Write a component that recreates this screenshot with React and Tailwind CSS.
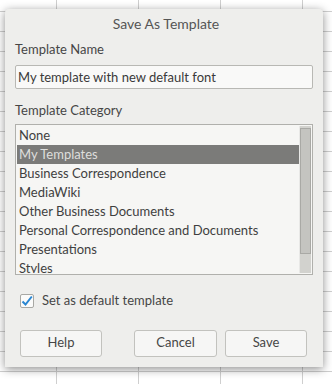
import React from "react";

const categories = [
  "None",
  "My Templates",
  "Business Correspondence",
  "MediaWiki",
  "Other Business Documents",
  "Personal Correspondence and Documents",
  "Presentations",
  "Styles",
];

const SaveAsTemplate = () => {
  const selected = 1;

  return (
    <div
      className="relative w-[332px] h-[384px] overflow-hidden bg-white"
      style={{ fontFamily: 'Lato, "Noto Sans", sans-serif' }}
    >
      {/* spreadsheet grid behind the dialog */}
      <div className="absolute inset-0 bg-[linear-gradient(to_right,#cfcfcf_1px,transparent_1px),linear-gradient(to_bottom,#cfcfcf_1px,transparent_1px)] bg-[size:82px_20px] bg-[position:56px_11px]" />

      {/* Dialog */}
      <div className="absolute left-[5px] top-[9px] w-[318px] h-[358px] bg-[#eeeeec] rounded-t-[4px] shadow-[0_2px_10px_rgba(0,0,0,0.45)] text-[#464646] text-[13px] px-[10px] flex flex-col">
        <div className="h-[27px] flex items-center justify-center text-[14px] text-[#555] pt-[1px] pl-[4px]">
          Save As Template
        </div>

        <div className="mt-[3px] h-[20px] leading-[20px]">Template Name</div>
        <div className="mt-[6px] h-[24px] bg-[#f9f9f8] border border-[#b8b8b4] rounded-[2px] px-[2px] leading-[22px] text-[#3a3a3a]">
          My template with new default font
        </div>

        <div className="mt-[11px] h-[20px] leading-[20px]">Template Category</div>
        <div className="mt-[4px] h-[151px] border border-[#b0b0ac] bg-[#f6f6f4] flex overflow-hidden p-[1px]">
          <div className="flex-1 overflow-hidden">
            {categories.map((c, i) => (
              <div
                key={c}
                className={
                  "h-[19px] leading-[18px] px-[2px] whitespace-nowrap " +
                  (i === selected ? "bg-[#7b7b79] text-[#dededc]" : "text-[#3f3f3f]")
                }
              >
                {c}
              </div>
            ))}
          </div>
          <div className="w-[12px] bg-[#d2d2ce] border-l border-[#e8e8e6] py-[2px] px-[0px]">
            <div className="h-[126px] bg-[#c4c4c0] border border-[#a9a9a5]" />
          </div>
        </div>

        <div className="mt-[16px] flex items-center gap-[8px] pl-[5px]">
          <div className="w-[14px] h-[14px] border border-[#a8a8a4] rounded-[2px] bg-[#fbfbfa] flex items-center justify-center">
            <svg width="12" height="12" viewBox="0 0 12 12">
              <path d="M1.5 6.5 L4.5 9.5 L10.8 1.5" fill="none" stroke="#2a86d2" strokeWidth="2" />
            </svg>
          </div>
          <span>Set as default template</span>
        </div>

        <div className="mt-[19px] flex pl-[5px] pr-[6px]">
          <button className="w-[82px] h-[27px] bg-[#f6f6f5] border border-[#c2c2be] rounded-[3px] text-[#464646]">
            Help
          </button>
          <div className="flex-1" />
          <button className="w-[83px] h-[27px] bg-[#f6f6f5] border border-[#c2c2be] rounded-[3px] text-[#464646]">
            Cancel
          </button>
          <button className="ml-[8px] w-[82px] h-[27px] bg-[#f6f6f5] border border-[#c2c2be] rounded-[3px] text-[#464646]">
            Save
          </button>
        </div>
      </div>
    </div>
  );
};

export default function App() {
  return <SaveAsTemplate />;
}
